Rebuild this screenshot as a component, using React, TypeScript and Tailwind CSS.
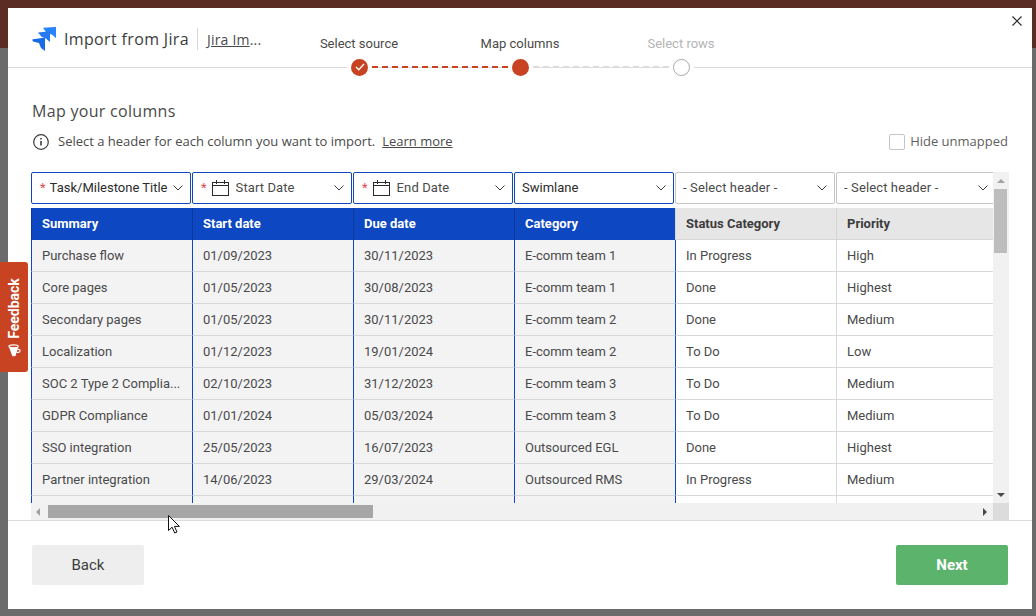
import React from 'react';

const columns = [
  { head: 'Summary', mapped: true },
  { head: 'Start date', mapped: true },
  { head: 'Due date', mapped: true },
  { head: 'Category', mapped: true },
  { head: 'Status Category', mapped: false },
  { head: 'Priority', mapped: false },
];

const rows = [
  ['Purchase flow', '01/09/2023', '30/11/2023', 'E-comm team 1', 'In Progress', 'High'],
  ['Core pages', '01/05/2023', '30/08/2023', 'E-comm team 1', 'Done', 'Highest'],
  ['Secondary pages', '01/05/2023', '30/11/2023', 'E-comm team 2', 'Done', 'Medium'],
  ['Localization', '01/12/2023', '19/01/2024', 'E-comm team 2', 'To Do', 'Low'],
  ['SOC 2 Type 2 Complia...', '02/10/2023', '31/12/2023', 'E-comm team 3', 'To Do', 'Medium'],
  ['GDPR Compliance', '01/01/2024', '05/03/2024', 'E-comm team 3', 'To Do', 'Medium'],
  ['SSO integration', '25/05/2023', '16/07/2023', 'Outsourced EGL', 'Done', 'Highest'],
  ['Partner integration', '14/06/2023', '29/03/2024', 'Outsourced RMS', 'In Progress', 'Medium'],
  ['', '', '', '', '', ''],
];

const selects = [
  { label: 'Task/Milestone Title', required: true, calendar: false, mapped: true },
  { label: 'Start Date', required: true, calendar: true, mapped: true },
  { label: 'End Date', required: true, calendar: true, mapped: true },
  { label: 'Swimlane', required: false, calendar: false, mapped: true },
  { label: '- Select header -', required: false, calendar: false, mapped: false },
  { label: '- Select header -', required: false, calendar: false, mapped: false },
];

function JiraLogo() {
  return (
    <svg width="24" height="24" viewBox="0 0 24 24" className="shrink-0">
      <path d="M11 .8 24 0v11l-4.500-3.800H15.500z" fill="#2684ff" />
      <path d="M6 5.500 18 4.300V15l-4.500-3.800-4-1.500z" fill="#2478f2" />
      <path d="M0 12.500 13 10.500V24l-4-3-2-5-6-1.500z" fill="#1a6ae6" />
    </svg>
  );
}

function Chevron() {
  return (
    <svg width="10" height="6" viewBox="0 0 10 6" fill="none" stroke="#3c3c3c" strokeWidth="1" className="shrink-0">
      <path d="M.5.5 5 5 9.500.5" />
    </svg>
  );
}

function Calendar() {
  return (
    <svg width="17" height="16" viewBox="0 0 17 16" fill="none" stroke="#2b2b2b" strokeWidth="1" className="shrink-0">
      <rect x=".5" y="2.500" width="16" height="13" />
      <path d="M.5 5.500h16M4.500 0v4M12.500 0v4" />
    </svg>
  );
}

function SelectBox({ item }: { item: (typeof selects)[number] }) {
  return (
    <div
      className={`flex h-[32px] w-[160px] shrink-0 items-center rounded-[2px] border bg-white pr-[7px] text-[13px] ${
        item.mapped ? 'border-[#0d47c1] text-[#2b2b2b]' : 'border-[#c4c4c4] tracking-[0.12px] text-[#4a4a4a]'
      } ${item.required ? 'pl-[8px]' : 'pl-[7px]'}`}
    >
      {item.required && <span className={`text-[#e5484d] ${item.calendar ? 'mr-[5px]' : 'mr-[4px]'}`}>*</span>}
      {item.calendar && <Calendar />}
      <span className={`flex-1 truncate ${item.calendar ? 'ml-[7px] tracking-[0.1px] text-[#4a4a4a]' : ''}`}>{item.label}</span>
      <Chevron />
    </div>
  );
}

function Stepper() {
  return (
    <div className="mb-[-9px] ml-[56px] flex flex-col self-end">
      <div className="flex w-[402px] justify-between text-[13px] leading-[16px] text-[#4a4a4a]">
        <span className="w-[80px] text-center whitespace-nowrap">Select source</span>
        <span className="w-[80px] text-center whitespace-nowrap">Map columns</span>
        <span className="w-[80px] text-center whitespace-nowrap text-[#b4b4b4]">Select rows</span>
      </div>
      <div className="mt-[6px] ml-[28px] flex items-center">
        <div className="flex h-[18px] items-center bg-white px-[4px]">
          <span className="flex h-[17px] w-[17px] items-center justify-center rounded-full bg-[#c84322]">
            <svg width="10" height="8" viewBox="0 0 10 8" fill="none" stroke="#fff" strokeWidth="1.300">
              <path d="M1 4l2.800 2.800L9 1" />
            </svg>
          </span>
        </div>
        <div className="w-[136px] border-t-2 border-dashed border-[#c84322]" />
        <div className="flex h-[18px] items-center bg-white px-[4px]">
          <span className="h-[17px] w-[17px] rounded-full bg-[#c84322]" />
        </div>
        <div className="w-[136px] border-t-2 border-dashed border-[#dcdcdc]" />
        <div className="flex h-[18px] items-center bg-white px-[4px]">
          <span className="h-[17px] w-[17px] rounded-full border border-[#a8a8a8] bg-white" />
        </div>
      </div>
    </div>
  );
}

function Table() {
  return (
    <div className="mt-[20px] ml-[-1px] flex h-[348px] w-[978px]">
      <div className="flex w-[962px] flex-col">
        <div className="flex h-[331px] flex-col overflow-hidden">
          <div className="flex shrink-0 gap-[1px] overflow-hidden">
            {selects.map((s, i) => (
              <SelectBox key={i} item={s} />
            ))}
          </div>
          <div className="mt-[4px] flex h-[32px] shrink-0 text-[13px] leading-[32px]">
            {columns.map((c, i) => (
              <div
                key={c.head}
                className={`h-full shrink-0 px-[10px] font-bold ${i === 5 ? 'w-[157px]' : 'w-[161px]'} ${
                  c.mapped
                    ? 'border-l border-[#0a3a9e] bg-[#0d47c1] text-white'
                    : 'border-b border-l border-[#d6d6d6] bg-[#e6e6e6] text-[#3c3c3c]'
                }`}
              >
                {c.head}
              </div>
            ))}
          </div>
          {rows.map((r, ri) => (
            <div key={ri} className="flex h-[32px] shrink-0 text-[13px] leading-[31px] text-[#4a4a4a]">
              {r.map((cell, i) => (
                <div
                  key={i}
                  className={`h-full shrink-0 truncate border-b border-l border-b-[#d8d8d8] px-[10px] ${
                    i === 5 ? 'w-[157px]' : 'w-[161px]'
                  } ${i < 4 ? 'bg-[#f3f3f4]' : 'bg-white'} ${i < 5 ? 'border-l-[#0d47c1]' : 'border-l-[#d8d8d8]'}`}
                >
                  {cell}
                </div>
              ))}
            </div>
          ))}
        </div>
        {/* horizontal scrollbar */}
        <div className="flex h-[17px] items-center bg-[#f1f1f1] pl-[5px]">
          <span className="h-0 w-0 border-y-[4px] border-r-[4px] border-y-transparent border-r-[#a3a3a3]" />
          <div className="ml-[8px] h-[13px] w-[325px] bg-[#a6a6a6]" />
          <div className="flex-1" />
          <span className="mr-[6px] h-0 w-0 border-y-[4px] border-l-[4px] border-y-transparent border-l-[#4a4a4a]" />
        </div>
      </div>
      {/* vertical scrollbar */}
      <div className="flex w-[16px] flex-col bg-[#f1f1f1]">
        <div className="flex h-[17px] items-center justify-center">
          <span className="h-0 w-0 border-x-[4px] border-b-[4px] border-x-transparent border-b-[#a3a3a3]" />
        </div>
        <div className="ml-[1px] h-[64px] w-[13px] bg-[#bdbdbd]" />
        <div className="flex-1" />
        <div className="flex h-[17px] items-center justify-center">
          <span className="h-0 w-0 border-x-[4px] border-t-[4px] border-x-transparent border-t-[#4a4a4a]" />
        </div>
        <div className="h-[17px] bg-[#dcdcdc]" />
      </div>
    </div>
  );
}

export default function App() {
  return (
    <div className="relative h-[616px] w-[1036px] overflow-hidden bg-[linear-gradient(#5a2c24_48px,#6b6b6b_48px)] pt-[8px] pl-[8px] font-['Roboto',sans-serif]">
      <div className="relative flex h-[601px] w-[1024px] flex-col bg-white">
        <header className="flex h-[60px] shrink-0 border-b border-[#dcdcdc] pl-[24px]">
          <div className="flex h-[59px] w-[231px] items-center pt-[3px] font-['Open_Sans',sans-serif]">
            <JiraLogo />
            <span className="ml-[8px] text-[16px] font-medium tracking-[0.35px] whitespace-nowrap text-[#3c3c3c]">Import from Jira</span>
            <span className="mr-[9px] ml-[8px] h-[22px] w-px shrink-0 bg-[#d6d6d6]" />
            <span className="text-[14px] tracking-[0.2px] whitespace-nowrap text-[#4a4a4a]">
              <span className="underline">Jira Im</span>...
            </span>
          </div>
          <Stepper />
          <button className="absolute top-[8px] right-[10px] text-[#2b2b2b]">
            <svg width="10" height="10" viewBox="0 0 10 10" fill="none" stroke="currentColor" strokeWidth="1.200">
              <path d="M.5.5l9 9M9.500.5l-9 9" />
            </svg>
          </button>
        </header>

        <main className="flex-1 border-b border-[#dcdcdc] pt-[32px] pl-[24px] font-['Open_Sans',sans-serif]">
          <h1 className="text-[16px] leading-[22px] font-medium tracking-[0.3px] text-[#4a4a4a]">Map your columns</h1>
          <div className="mt-[10px] flex h-[20px] w-[976px] items-center text-[13px] text-[#4a4a4a]">
            <svg width="16" height="16" viewBox="0 0 16 16" fill="none" stroke="#3c3c3c" className="ml-[1px] shrink-0">
              <circle cx="8" cy="8" r="7.300" strokeWidth="1.200" />
              <path d="M8 7v4.500" strokeWidth="1.600" />
              <path d="M8 4v1.600" strokeWidth="1.600" />
            </svg>
            <span className="ml-[9px]">Select a header for each column you want to import.</span>
            <span className="ml-[7px] underline">Learn more</span>
            <span className="ml-auto h-[16px] w-[16px] rounded-[2px] border border-[#c4c4c4]" />
            <span className="ml-[5px] text-[#5f5f5f]">Hide unmapped</span>
          </div>
          <div className="font-['Roboto',sans-serif]">
            <Table />
          </div>
        </main>

        <footer className="flex h-[88px] shrink-0 items-start justify-between px-[24px] pt-[24px]">
          <button className="h-[40px] w-[112px] rounded-[2px] bg-[#eeeeef] text-[15px] text-[#3c3c3c]">Back</button>
          <button className="h-[40px] w-[112px] rounded-[2px] bg-[#5cb36c] text-[15px] font-bold text-white">Next</button>
        </footer>
      </div>

      {/* feedback tab */}
      <div className="absolute top-[262px] left-0 flex h-[110px] w-[28px] items-center justify-center rounded-r-[3px] bg-[#c84322]">
        <div className="flex -rotate-90 items-center gap-[5px] text-[14px] font-bold whitespace-nowrap text-white">
          <svg width="13" height="13" viewBox="0 0 13 13">
            <path d="M.5 4.500 10 1v9.500L.5 7.500z" fill="#fff" />
            <ellipse cx="10.500" cy="5.700" rx="1.500" ry="4.700" fill="#c84322" stroke="#fff" strokeWidth="1.200" />
            <path d="M4.500 8.500v2.300a1.500 1.500 0 0 0 3 0V9.500" fill="none" stroke="#fff" strokeWidth="1.200" />
          </svg>
          Feedback
        </div>
      </div>

      {/* mouse pointer */}
      <svg width="13" height="19" viewBox="0 0 13 19" className="absolute top-[515px] left-[168px]">
        <path d="M.5.5v15l3.600-3.300 2.600 5.800 2.300-1-2.600-5.600h5z" fill="#fff" stroke="#111" strokeWidth="1" />
      </svg>
    </div>
  );
}
